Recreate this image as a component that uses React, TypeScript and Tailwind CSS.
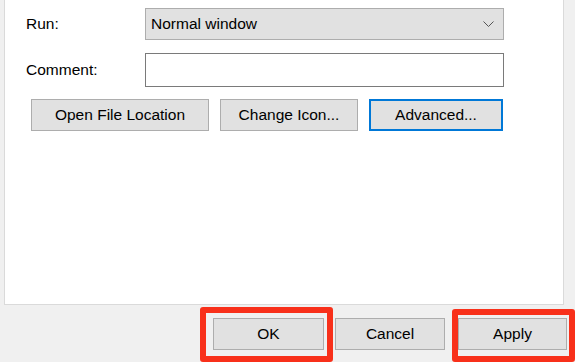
import React from 'react';

const font = { fontFamily: '"Liberation Sans", Arial, sans-serif' };

const base =
  'h-8 bg-[#e1e1e1] text-[15.5px] text-black flex items-center justify-center';
const btn = `${base} border border-[#adadad]`;

const Chevron = () => (
  <svg width="11" height="6" viewBox="0 0 11 6" className="text-[#555]">
    <path d="M0.5 0.5 L5.5 5.5 L10.5 0.5" fill="none" stroke="currentColor" strokeWidth="1" />
  </svg>
);

export default function App() {
  return (
    <div className="w-[575px] h-[362px] bg-[#f0f0f0] overflow-hidden" style={font}>
      <div className="ml-[4px] w-[560px] h-[305px] bg-white border-x border-b border-[#dadada]">
        <div className="flex items-center pt-[8px]">
          <span className="w-[140px] pl-[21px] text-[15.5px] text-black">Run:</span>
          <div className="w-[359px] h-[32px] bg-[#e1e1e1] border border-[#adadad] flex items-center justify-between pl-[5px] pr-[9px]">
            <span className="text-[15.5px] text-black">Normal window</span>
            <Chevron />
          </div>
        </div>
        <div className="flex items-center mt-[13px]">
          <span className="w-[140px] pl-[21px] text-[15.5px] text-black">Comment:</span>
          <div className="w-[359px] h-[34px] bg-white border border-[#7a7a7a]" />
        </div>
        <div className="flex items-center gap-[11px] mt-[12px] pl-[26px]">
          <button className={`${btn} w-[178px]`}>Open File Location</button>
          <button className={`${btn} w-[138px]`}>Change Icon...</button>
          <button className={`${base} w-[134px] border-2 border-[#0078d7]`}>Advanced...</button>
        </div>
      </div>
      <div className="relative h-[57px]">
        <div className="flex items-center pt-[13px] pl-[213px]">
          <button className={`${btn} w-[111px]`}>OK</button>
          <button className={`${btn} w-[110px] ml-[11px]`}>Cancel</button>
          <button className={`${btn} w-[109px] ml-[13px]`}>Apply</button>
        </div>
        <div className="absolute left-[200px] top-[2px] w-[133px] h-[55px] border-[6px] border-[#f8301a] rounded-[3px]" />
        <div className="absolute left-[452px] top-[4px] w-[123px] h-[53px] border-[6px] border-[#f8301a] rounded-[3px]" />
      </div>
    </div>
  );
}
